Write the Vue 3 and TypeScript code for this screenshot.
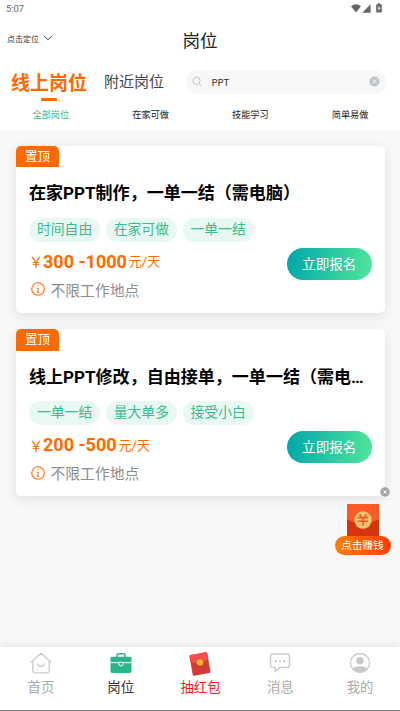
<script setup lang="ts">
import { ref } from 'vue'

interface Job {
  title: string
  tags: string[]
  pay: string
}

const filters: string[] = ['全部岗位', '在家可做', '技能学习', '简单易做']
const activeFilter = ref(0)
const keyword = ref('PPT')
const showPromo = ref(true)

const jobs: Job[] = [
  { title: '在家PPT制作，一单一结（需电脑）', tags: ['时间自由', '在家可做', '一单一结'], pay: '300 -1000' },
  { title: '线上PPT修改，自由接单，一单一结（需电…', tags: ['一单一结', '量大单多', '接受小白'], pay: '200 -500' },
]
</script>

<template>
  <div class="screen">
    <header class="top">
      <div class="status">
        <span>5:07</span>
        <div class="status-icons">
          <svg width="10" height="9" viewBox="0 0 10 9"><path d="M0 2.2Q5-1.6 10 2.2L5 8.6Z" /></svg>
          <svg width="9" height="9" viewBox="0 0 9 9"><path d="M8.6.3V8.7H.2Z" /></svg>
          <svg class="battery" width="6" height="10" viewBox="0 0 6 10"><path d="M.8 1.2H2V.2H4v1h1.2q.6 0 .6.6v7q0 .7-.6.7H.8q-.6 0-.6-.7v-7q0-.6.6-.6Z" /><path d="M3.4 2.5 1.5 5.7h1.2v2.4l1.9-3.4H3.4Z" fill="#eee" /></svg>
        </div>
      </div>
      <div class="titlebar">
        <button class="locate">
          点击定位
          <svg width="10" height="6" viewBox="0 0 10 6"><path d="M1 .8 5 4.8 9 .8" fill="none" stroke="#444" stroke-width="1" /></svg>
        </button>
        <h1>岗位</h1>
        <span></span>
      </div>
      <div class="search-row">
        <div class="tab current">线上岗位</div>
        <div class="tab">附近岗位</div>
        <label class="search">
          <svg width="11" height="11" viewBox="0 0 11 11" fill="none" stroke="#c3c6cc" stroke-width="1"><circle cx="4.5" cy="4.8" r="3.6" /><path d="m7.2 7.5 2.4 2.3" /></svg>
          <input v-model="keyword" type="text" />
          <svg class="clear" width="11" height="11" viewBox="0 0 11 11" @click="keyword = ''"><circle cx="5.5" cy="5.5" r="5.1" fill="#c0c4cc" /><path d="m3.7 3.7 3.6 3.6m0-3.6L3.7 7.3" stroke="#fff" stroke-width=".9" /></svg>
        </label>
      </div>
      <div class="filters">
        <span v-for="(f, i) in filters" :key="f" :class="{ on: i === activeFilter }" @click="activeFilter = i">{{ f }}</span>
      </div>
    </header>

    <main class="list">
      <article v-for="job in jobs" :key="job.title" class="card">
        <div class="pin">置顶</div>
        <h2>{{ job.title }}</h2>
        <div class="tags">
          <span v-for="t in job.tags" :key="t">{{ t }}</span>
        </div>
        <div class="bottom">
          <div class="info">
            <div class="pay"><span class="yen">￥</span><b>{{ job.pay }}</b><span class="unit">元/天</span></div>
            <div class="place">
              <svg width="14" height="14" viewBox="0 0 14 14" fill="none" stroke="#ff6a0a"><circle cx="7" cy="7" r="6.3" stroke-width="1.1" /><path d="M7 3.2v1.4M7 6v4.200M6 6.300h1M5.900 10.300h2.200" stroke-width="1" /></svg>
              <span>不限工作地点</span>
            </div>
          </div>
          <button class="apply">立即报名</button>
        </div>
      </article>
    </main>

    <aside v-if="showPromo" class="promo">
      <svg class="close" width="10" height="10" viewBox="0 0 10 10" @click="showPromo = false"><circle cx="5" cy="5" r="4.7" fill="#a5a5a5" /><path d="m3.4 3.4 3.2 3.2m0-3.2L3.4 6.6" stroke="#fff" stroke-width="1" /></svg>
      <svg class="packet" width="32" height="34" viewBox="0 0 32 34">
        <path d="M1.5 0h29Q32 0 32 1.5V34H0V1.5Q0 0 1.5 0Z" fill="#d3360f" />
        <path d="M1.5 0h29Q32 0 32 1.5V15Q16 25 0 15V1.5Q0 0 1.5 0Z" fill="#ff5a26" />
        <circle cx="16" cy="16" r="8.7" fill="#e9c36f" />
        <path d="m12.5 10.5 1.8 2.3m5.2-2.3-1.8 2.3M11 13.6h10M11 17.2h10M16 13.6v8" fill="none" stroke="#f0571f" stroke-width="1.6" />
      </svg>
      <span class="earn">点击赚钱</span>
    </aside>

    <nav class="nav">
      <a>
        <svg width="22" height="22" viewBox="0 0 22 22" fill="none" stroke="#cbcbcb" stroke-width="1.3" stroke-linejoin="round" stroke-linecap="round"><path d="M1.2 10 11 1.2 20.8 10M2.8 9v10q0 1.8 1.8 1.8h12.8q1.8 0 1.8-1.8V9M7.8 11.8q.5 2.6 3.2 2.6t3.2-2.6" /></svg>
        <span>首页</span>
      </a>
      <a class="active">
        <svg width="22" height="22" viewBox="0 0 22 22"><path d="M7 5V3.2Q7 1.7 8.5 1.7h5Q15 1.7 15 3.2V5" fill="none" stroke="#2bb58a" stroke-width="1.5" /><path d="M1.8 4.7h18.4q1.3 0 1.3 1.3v13.3q0 1.7-1.7 1.7H2.2Q.5 21 .5 19.300V6q0-1.300 1.300-1.300Z" fill="#2bb58a" /><path d="M.5 10.700h8.300m4.400 0h8.300M8.800 10.200v1.700q0 2.100 2.200 2.100t2.200-2.100v-1.700Z" fill="none" stroke="#fff" stroke-width="1" /></svg>
        <span>岗位</span>
      </a>
      <a class="lucky">
        <svg width="22" height="24" viewBox="0 0 22 24"><g transform="rotate(-10 11 12)"><rect x="2" y="1.500" width="18" height="21" rx="1.500" fill="#d33b36" /><path d="M3.500 1.500h15q1.500 0 1.500 1.500v5Q11 15 2 8V3q0-1.500 1.500-1.500Z" fill="#fa4b4d" /><circle cx="11.200" cy="10.500" r="3.100" fill="#f8c51d" /><circle cx="11.200" cy="10.500" r="1.600" fill="#f3b20d" /></g></svg>
        <span>抽红包</span>
      </a>
      <a>
        <svg width="22" height="22" viewBox="0 0 22 22"><path d="M4 2h14q2.500 0 2.500 2.500V13q0 2.500-2.500 2.500h-7.200L6.300 19.500v-4H4Q1.500 15.500 1.500 13V4.500Q1.500 2 4 2Z" fill="none" stroke="#cbcbcb" stroke-width="1.400" stroke-linejoin="round" /><path d="M6 8.200h2v2H6zm4 0h2v2h-2zm4 0h2v2h-2z" fill="#cbcbcb" /></svg>
        <span>消息</span>
      </a>
      <a>
        <svg width="22" height="22" viewBox="0 0 22 22"><circle cx="11" cy="11" r="9.500" fill="none" stroke="#cbcbcb" stroke-width="1.300" /><circle cx="11" cy="8.800" r="3.700" fill="#cbcbcb" /><path d="M3.500 16.500Q6.300 14.200 11 14.200t7.500 2.300Q15.700 20.400 11 20.400T3.500 16.500Z" fill="#cbcbcb" /></svg>
        <span>我的</span>
      </a>
    </nav>
  </div>
</template>

<style>
body {
  margin: 0;
  background: #f8f8f8;
}
</style>

<style scoped>
.screen {
  position: relative;
  box-sizing: border-box;
  width: 100%;
  height: 711px;
  display: flex;
  flex-direction: column;
  overflow: hidden;
  background: #f8f8f8;
  color: #333;
  font-family: Roboto, "Noto Sans CJK SC", sans-serif;
}
svg {
  display: block;
  flex: none;
}
button {
  border: 0;
  padding: 0;
  background: none;
  font-family: inherit;
}
.top {
  height: 130px;
  flex: none;
  background: #fff;
}
.status {
  height: 16px;
  padding: 0 18px 0 6px;
  display: flex;
  align-items: center;
  justify-content: space-between;
  font-size: 9.3px;
  color: #666;
}
.status-icons {
  display: flex;
  align-items: center;
  gap: 1px;
  fill: #666;
}
.battery {
  margin-left: 4px;
}
.titlebar {
  height: 49px;
  padding: 0 7px;
  display: grid;
  grid-template-columns: 1fr auto 1fr;
  align-items: center;
}
.locate {
  display: flex;
  align-items: center;
  gap: 4px;
  margin-top: -5px;
  font-size: 8px;
  color: #333;
}
h1 {
  margin: 1px 0 0;
  font-size: 17.6px;
  font-weight: 400;
  line-height: 26px;
  color: #222;
}
.search-row {
  display: flex;
  align-items: center;
  height: 36px;
  margin-top: -1.5px;
  margin-bottom: 1.5px;
  padding: 0 14px 0 11px;
}
.tab {
  font-size: 15px;
  line-height: 24px;
  width: 59px;
  white-space: nowrap;
  color: #444;
}
.tab.current {
  display: flex;
  flex-direction: column;
  align-items: center;
  width: 76px;
  margin: 4px 17px 0 0;
  font-size: 19px;
  font-weight: 700;
  line-height: 28px;
  color: #ff6a00;
}
.tab.current::after {
  content: "";
  width: 16px;
  height: 3.5px;
  margin: 0 0 -3.5px;
  border-radius: 1px;
  background: #ff6a00;
}
.search {
  flex: 1;
  display: flex;
  align-items: center;
  height: 24px;
  margin-left: 23px;
  padding: 0 6px;
  border-radius: 12px;
  background: #f7f7f7;
  box-sizing: border-box;
}
.search input {
  flex: 1;
  min-width: 0;
  margin-left: 8.5px;
  padding: 0;
  border: 0;
  outline: 0;
  background: none;
  font: 9.6px "Noto Sans CJK SC", sans-serif;
  color: #333;
}
.filters {
  display: grid;
  grid-template-columns: repeat(4, 1fr);
  height: 27px;
  padding-left: 1px;
  line-height: 27px;
  text-align: center;
  font-size: 9.2px;
  color: #222;
}
.filters .on {
  color: #3cba91;
}
.list {
  display: flex;
  flex-direction: column;
  gap: 16.3px;
  padding: 15.700px 15px 0 16px;
}
.card {
  height: 167.200px;
  box-sizing: border-box;
  padding: 0 13px;
  border-radius: 5px;
  background: #fff;
  box-shadow: 0 3px 12px rgba(0, 0, 0, .1);
}
.pin {
  width: 43px;
  height: 21.500px;
  margin-left: -13px;
  border-radius: 5px 5px 0 0;
  background: #ff6a00;
  color: #fff;
  font-size: 12.500px;
  line-height: 21px;
  text-align: center;
}
h2 {
  width: 340px;
  margin: 14px 0 11.500px;
  white-space: nowrap;
  font-size: 17.05px;
  font-weight: 700;
  line-height: 25px;
  color: #000;
}
.tags {
  display: flex;
  gap: 5.600px;
}
.tags span {
  height: 24px;
  padding: 0 8px;
  border-radius: 12px;
  background: #e8f8f2;
  color: #3cba91;
  font-size: 13.800px;
  line-height: 23.500px;
}
.bottom {
  display: flex;
  align-items: flex-start;
  justify-content: space-between;
}
.pay {
  display: flex;
  align-items: center;
  height: 27px;
  margin-top: 6px;
  color: #ff6a00;
  font-size: 13px;
}
.pay b {
  font-size: 18px;
}
.yen {
  width: 14px;
  font-size: 14px;
}
.unit {
  margin: -1px 0 0 2px;
}
.place {
  display: flex;
  align-items: center;
  gap: 5.500px;
  height: 29px;
  padding-left: 2px;
  font-size: 14.800px;
  color: #8d8d8d;
}
.apply {
  width: 85.500px;
  height: 32px;
  margin-top: 6px;
  padding-bottom: 2px;
  border-radius: 16px;
  background: linear-gradient(100deg, #05a9aa 5%, #4de39b 95%);
  color: #fff;
  font-size: 13.600px;
}
.promo {
  position: absolute;
  left: 334.5px;
  top: 487px;
  width: 56px;
  display: flex;
  flex-direction: column;
  align-items: center;
}
.close {
  align-self: flex-end;
  margin-right: 1px;
}
.packet {
  margin: 7px 0 -2px;
}
.earn {
  width: 56px;
  height: 19px;
  border-radius: 10px;
  background: linear-gradient(90deg, #ff7f00, #ff3d09);
  color: #fff;
  font-size: 10.600px;
  line-height: 19px;
  text-align: center;
}
.nav {
  box-sizing: border-box;
  height: 64px;
  margin-top: auto;
  flex: none;
  display: grid;
  grid-template-columns: repeat(5, 1fr);
  padding-left: 1px;
  border-bottom: 1px solid #777;
  background: #fff;
  box-shadow: 0 -1px 8px rgba(0, 0, 0, .09);
}
.nav a {
  display: flex;
  flex-direction: column;
  align-items: center;
  padding-top: 5px;
  font-size: 13.400px;
  line-height: 20px;
  color: #aaa;
}
.nav span {
  margin-top: 4px;
}
.nav .active {
  color: #333;
}
.nav .lucky {
  color: #ff1717;
}
.lucky svg {
  margin-bottom: -2px;
}
</style>
